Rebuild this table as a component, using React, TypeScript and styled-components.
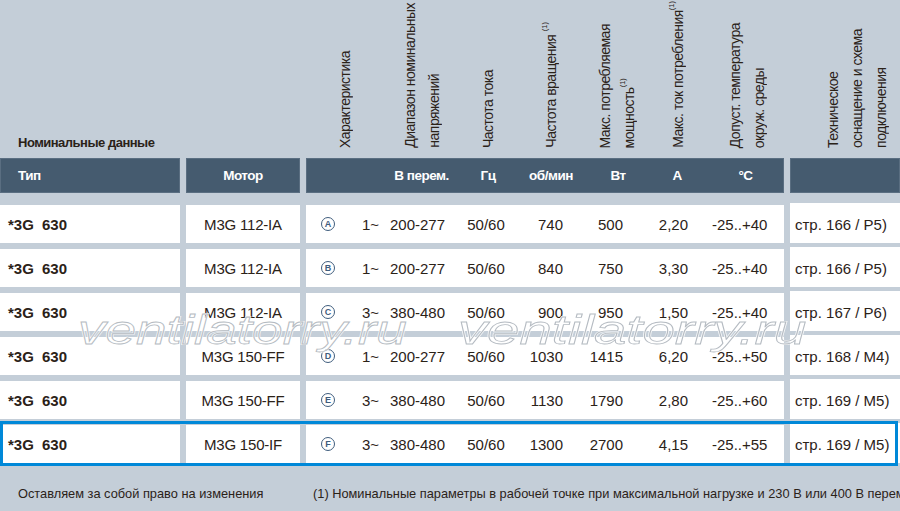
import React from 'react';
import styled, { createGlobalStyle, css } from 'styled-components';

const SANS = '"Liberation Sans", Arial, sans-serif';
const INK = '#2b2218';

const GlobalStyle = createGlobalStyle`
  html, body { margin: 0; padding: 0; }
  body { background: #c4ced8; font-family: ${SANS}; color: ${INK}; }
`;

const Page = styled.div`
  position: relative;
  width: 900px;
  height: 511px;
  overflow: hidden;
  background: #c4ced8;
`;

const Top = styled.div`
  height: 158px;
  box-sizing: border-box;
  padding-bottom: 10px;
  display: flex;
  align-items: flex-end;
`;

const Title = styled.div`
  flex: none;
  width: 333px;
  box-sizing: border-box;
  padding-left: 18px;
  margin-bottom: -2px;
  font: bold 13px/15px ${SANS};
  letter-spacing: -0.5px;
`;

const VLabel = styled.div<{ $ml: number }>`
  flex: none;
  margin-left: ${(p) => p.$ml}px;
  writing-mode: vertical-rl;
  transform: rotate(180deg);
  font: 14px/24px ${SANS};
  letter-spacing: -0.5px;
  white-space: nowrap;

  sup {
    font-size: 7.5px;
    line-height: 0;
    letter-spacing: 0;
    vertical-align: super;
  }
`;

const cols = css`
  display: grid;
  grid-template-columns: 180px 114px 478px 1fr;
  column-gap: 6px;
`;

const HeadBar = styled.div`
  ${cols};
  height: 35px;
  margin-bottom: 12px;
`;

const HeadCell = styled.div<{ $center?: boolean }>`
  background: #455b6f;
  border: 1px solid #5a6e81;
  box-sizing: border-box;
  display: flex;
  align-items: center;
  justify-content: ${(p) => (p.$center ? 'center' : 'flex-start')};
  padding-left: ${(p) => (p.$center ? 0 : 17)}px;
  color: #fff;
  font: bold 13.5px ${SANS};
  letter-spacing: -0.5px;
`;

const HeadUnits = styled(HeadCell)`
  display: grid;
  grid-template-columns: 82px 65px 68px 58px 76px 42px 85px;
  padding-left: 0;
`;

const Unit = styled.span<{ $pad?: number }>`
  text-align: center;
  padding-left: ${(p) => p.$pad || 0}px;
`;

const Rows = styled.div`
  display: flex;
  flex-direction: column;
  gap: 6px;
`;

const Row = styled.div<{ $hl?: boolean }>`
  ${cols};
  height: 38px;
  position: relative;

  ${(p) =>
    p.$hl &&
    css`
      &::after {
        content: '';
        position: absolute;
        top: -4px;
        bottom: -3px;
        left: 0;
        right: 2px;
        border: 3px solid #0088d8;
        pointer-events: none;
      }
    `}
`;

const Cell = styled.div`
  background: #fff;
  display: flex;
  align-items: center;
  font: 15px ${SANS};
  white-space: nowrap;
`;

const TypeCell = styled(Cell)`
  padding-left: 8px;
  font-weight: bold;
  word-spacing: 4px;
`;

const MotorCell = styled(Cell)`
  justify-content: center;
  letter-spacing: -0.2px;
`;

const Specs = styled(Cell)`
  display: grid;
  grid-template-columns: 44px 40px 72px 48px 53px 60px 65px 96px;
`;

const Spec = styled.span<{ $align?: 'left' | 'center' | 'right'; $pad?: number }>`
  text-align: ${(p) => p.$align || 'left'};
  padding-left: ${(p) => p.$pad || 0}px;
`;

const Mark = styled.span`
  justify-self: center;
  width: 12px;
  height: 12px;
  border: 1.4px solid #3f5d7d;
  border-radius: 50%;
  display: flex;
  align-items: center;
  justify-content: center;
  color: #3f5d7d;
  font: bold 9px/1 ${SANS};
`;

const RefCell = styled(Cell)`
  padding-left: 5px;
  margin-top: -2px;
  padding-top: 2px;
`;

const Footer = styled.div`
  display: flex;
  padding: 23px 0 0 18px;
  font: 12.8px/16px ${SANS};
  white-space: nowrap;
`;

const Note = styled.span<{ $w?: number }>`
  flex: none;
  width: ${(p) => (p.$w ? `${p.$w}px` : 'auto')};
`;

const Watermark = styled.div<{ $left: number; $scale: number }>`
  position: absolute;
  top: 310px;
  left: ${(p) => p.$left}px;
  transform: scaleX(${(p) => p.$scale});
  transform-origin: left top;
  font: italic 41px/41px ${SANS};
  color: transparent;
  -webkit-text-stroke: 2px rgba(255, 255, 255, 0.85);
  white-space: nowrap;
  pointer-events: none;

  &::after {
    content: attr(data-text);
    position: absolute;
    left: 0;
    top: 0;
    -webkit-text-stroke: 0.8px #b5bbc2;
  }
`;

type Item = {
  mark: string;
  phase: string;
  volt: string;
  rpm: string;
  power: string;
  amp: string;
  temp: string;
  motor: string;
  ref: string;
};

const items: Item[] = [
  { mark: 'A', phase: '1~', volt: '200-277', rpm: '740', power: '500', amp: '2,20', temp: '-25..+40', motor: 'M3G 112-IA', ref: 'стр. 166 / P5)' },
  { mark: 'B', phase: '1~', volt: '200-277', rpm: '840', power: '750', amp: '3,30', temp: '-25..+40', motor: 'M3G 112-IA', ref: 'стр. 166 / P5)' },
  { mark: 'C', phase: '3~', volt: '380-480', rpm: '900', power: '950', amp: '1,50', temp: '-25..+40', motor: 'M3G 112-IA', ref: 'стр. 167 / P6)' },
  { mark: 'D', phase: '1~', volt: '200-277', rpm: '1030', power: '1415', amp: '6,20', temp: '-25..+50', motor: 'M3G 150-FF', ref: 'стр. 168 / M4)' },
  { mark: 'E', phase: '3~', volt: '380-480', rpm: '1130', power: '1790', amp: '2,80', temp: '-25..+60', motor: 'M3G 150-FF', ref: 'стр. 169 / M5)' },
  { mark: 'F', phase: '3~', volt: '380-480', rpm: '1300', power: '2700', amp: '4,15', temp: '-25..+55', motor: 'M3G 150-IF', ref: 'стр. 169 / M5)' },
];

export default function App() {
  return (
    <Page>
      <GlobalStyle />
      <Top>
        <Title>Номинальные данные</Title>
        <VLabel $ml={0}>Характеристика</VLabel>
        <VLabel $ml={41}>
          Диапазон номинальных
          <br />
          напряжений
        </VLabel>
        <VLabel $ml={30}>Частота тока</VLabel>
        <VLabel $ml={39}>
          Частота вращения <sup>(1)</sup>
        </VLabel>
        <VLabel $ml={30}>
          Макс. потребляемая
          <br />
          мощность<sup>(1)</sup>
        </VLabel>
        <VLabel $ml={25}>
          Макс. ток потребления<sup>(1)</sup>
        </VLabel>
        <VLabel $ml={33}>
          Допуст. температура
          <br />
          окруж. среды
        </VLabel>
        <VLabel $ml={50}>
          Техническое
          <br />
          оснащение и схема
          <br />
          подключения
        </VLabel>
      </Top>

      <HeadBar>
        <HeadCell>Тип</HeadCell>
        <HeadCell $center>Мотор</HeadCell>
        <HeadUnits>
          <Unit />
          <Unit>В перем.</Unit>
          <Unit>Гц</Unit>
          <Unit>об/мин</Unit>
          <Unit>Вт</Unit>
          <Unit>А</Unit>
          <Unit $pad={10}>°C</Unit>
        </HeadUnits>
        <HeadCell />
      </HeadBar>

      <Rows>
        {items.map((it, i) => (
          <Row key={it.mark} $hl={i === items.length - 1}>
            <TypeCell>*3G 630</TypeCell>
            <MotorCell>{it.motor}</MotorCell>
            <Specs>
              <Mark>{it.mark}</Mark>
              <Spec $pad={12}>{it.phase}</Spec>
              <Spec>{it.volt}</Spec>
              <Spec $align="center">50/60</Spec>
              <Spec $align="right">{it.rpm}</Spec>
              <Spec $align="right">{it.power}</Spec>
              <Spec $align="right">{it.amp}</Spec>
              <Spec $pad={24}>{it.temp}</Spec>
            </Specs>
            <RefCell>{it.ref}</RefCell>
          </Row>
        ))}
      </Rows>

      <Footer>
        <Note $w={295}>Оставляем за собой право на изменения</Note>
        <Note>(1) Номинальные параметры в рабочей точке при максимальной нагрузке и 230 В или 400 В перем. тока</Note>
      </Footer>

      <Watermark $left={78} $scale={1.34} data-text="ventilatorry.ru">
        ventilatorry.ru
      </Watermark>
      <Watermark $left={458} $scale={1.42} data-text="ventilatorry.ru">
        ventilatorry.ru
      </Watermark>
    </Page>
  );
}
